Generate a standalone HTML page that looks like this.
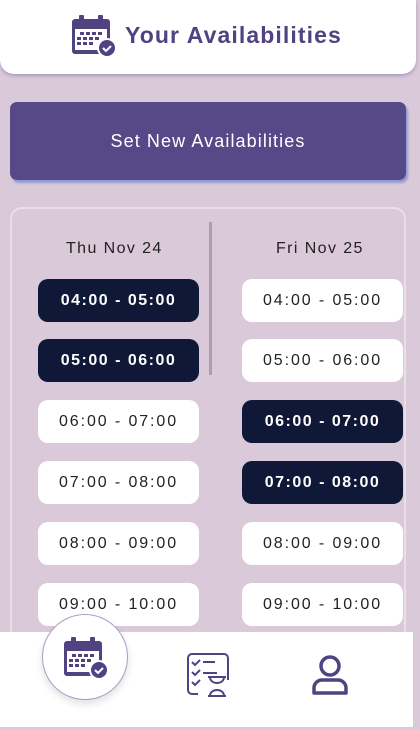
<!DOCTYPE html>
<html><head><style>
body{margin:0;width:420px;height:729px;background:#dac9d9;font-family:"Liberation Sans",sans-serif;position:relative;overflow:hidden}
.hdr{position:absolute;left:0;top:0;width:416px;height:74px;background:#fff;border-radius:0 0 14px 14px;box-shadow:0 2px 3px rgba(120,110,170,.5)}
.hdr span{position:absolute;left:125px;top:22px;font-size:23px;font-weight:bold;color:#514382;letter-spacing:1.1px}
.btn{position:absolute;left:10px;top:102px;width:396px;height:78px;background:#574887;border-radius:7px;box-shadow:2px 3px 2px #8e9ad6;color:#fff;font-size:18px;letter-spacing:1.1px;text-align:center;line-height:78px}
.panel{position:absolute;left:10px;top:207px;width:392px;height:440px;border:2px solid #e9dfe9;border-radius:12px}
.dv{position:absolute;left:209px;top:222px;width:3px;height:153px;background:#a9a0a9}
.h{position:absolute;top:240px;font-size:16px;letter-spacing:1.4px;color:#222}
.p{position:absolute;width:161px;height:43px;border-radius:10px;background:#fff;color:#222;font-size:16px;letter-spacing:1.9px;text-align:center;line-height:43px}
.d{background:#0f1836;color:#fff;font-weight:bold;letter-spacing:1.5px}
.nav{position:absolute;left:0;top:632px;width:413px;height:95px;background:#fff}
.circ{position:absolute;left:42px;top:614px;width:84px;height:84px;border-radius:50%;background:#fff;border:1.5px solid #a99cc4;box-shadow:0 4px 8px rgba(0,0,0,.12)}
</style></head><body>
<div class="hdr">
<svg style="position:absolute;left:72px;top:14px" width="46" height="44" viewBox="0 0 46 44"><rect x="0" y="5" width="38" height="35" rx="3" fill="#514382"/><rect x="7" y="1" width="5" height="8" rx="1" fill="#514382"/><rect x="26" y="1" width="5" height="8" rx="1" fill="#514382"/><rect x="3" y="15" width="32" height="21" fill="#fff"/><g fill="#514382"><rect x="8" y="18" width="4" height="3"/><rect x="14" y="18" width="4" height="3"/><rect x="20" y="18" width="4" height="3"/><rect x="26" y="18" width="4" height="3"/><rect x="5" y="23" width="4" height="3"/><rect x="11" y="23" width="4" height="3"/><rect x="17" y="23" width="4" height="3"/><rect x="23" y="23" width="4" height="3"/><rect x="5" y="28" width="4" height="3"/><rect x="11" y="28" width="4" height="3"/><rect x="17" y="28" width="4" height="3"/></g><circle cx="35" cy="34" r="10" fill="#fff"/><circle cx="35" cy="34" r="8" fill="#514382"/><path d="M31 34l3 3 5-5" stroke="#fff" stroke-width="2" fill="none"/></svg>
<span>Your Availabilities</span></div>
<div class="btn">Set New Availabilities</div>
<div class="panel"></div>
<div class="dv"></div>
<div class="h" style="left:66px">Thu Nov 24</div>
<div class="h" style="left:276px">Fri Nov 25</div>
<div class="p d" style="left:38px;top:279px">04:00 - 05:00</div>
<div class="p d" style="left:38px;top:339px">05:00 - 06:00</div>
<div class="p" style="left:38px;top:400px">06:00 - 07:00</div>
<div class="p" style="left:38px;top:461px">07:00 - 08:00</div>
<div class="p" style="left:38px;top:522px">08:00 - 09:00</div>
<div class="p" style="left:38px;top:583px">09:00 - 10:00</div>
<div class="p" style="left:242px;top:279px">04:00 - 05:00</div>
<div class="p" style="left:242px;top:339px">05:00 - 06:00</div>
<div class="p d" style="left:242px;top:400px">06:00 - 07:00</div>
<div class="p d" style="left:242px;top:461px">07:00 - 08:00</div>
<div class="p" style="left:242px;top:522px">08:00 - 09:00</div>
<div class="p" style="left:242px;top:583px">09:00 - 10:00</div>
<div class="nav"></div>
<div class="circ"></div>
<svg style="position:absolute;left:64px;top:636px" width="46" height="44" viewBox="0 0 46 44"><rect x="0" y="5" width="38" height="35" rx="3" fill="#514382"/><rect x="7" y="1" width="5" height="8" rx="1" fill="#514382"/><rect x="26" y="1" width="5" height="8" rx="1" fill="#514382"/><rect x="3" y="15" width="32" height="21" fill="#fff"/><g fill="#514382"><rect x="8" y="18" width="4" height="3"/><rect x="14" y="18" width="4" height="3"/><rect x="20" y="18" width="4" height="3"/><rect x="26" y="18" width="4" height="3"/><rect x="5" y="23" width="4" height="3"/><rect x="11" y="23" width="4" height="3"/><rect x="17" y="23" width="4" height="3"/><rect x="23" y="23" width="4" height="3"/><rect x="5" y="28" width="4" height="3"/><rect x="11" y="28" width="4" height="3"/><rect x="17" y="28" width="4" height="3"/></g><circle cx="35" cy="34" r="10" fill="#fff"/><circle cx="35" cy="34" r="8" fill="#514382"/><path d="M31 34l3 3 5-5" stroke="#fff" stroke-width="2" fill="none"/></svg>
<svg style="position:absolute;left:186px;top:653px" width="44" height="44" viewBox="0 0 44 44" fill="none" stroke="#514382" stroke-width="2"><path d="M12 41H6a4 4 0 0 1-4-4V5a4 4 0 0 1 4-4h32a4 4 0 0 1 4 4v22"/><path d="M6 9l3 3 5-5M6 19l3 3 5-5M6 29l3 3 5-5M17 9h12M17 20h14"/><path d="M22 24h18M22 43h18M24 24c0 8 14 8 14 0M24 43c0-8 14-8 14 0"/></svg>
<svg style="position:absolute;left:311px;top:655px" width="38" height="42" viewBox="0 0 38 42" fill="none" stroke="#514382" stroke-width="3.5"><circle cx="19" cy="11" r="9"/><path d="M3 38v-5a8 8 0 0 1 8-8h16a8 8 0 0 1 8 8v5z" stroke-linejoin="round"/></svg>
</body></html>
